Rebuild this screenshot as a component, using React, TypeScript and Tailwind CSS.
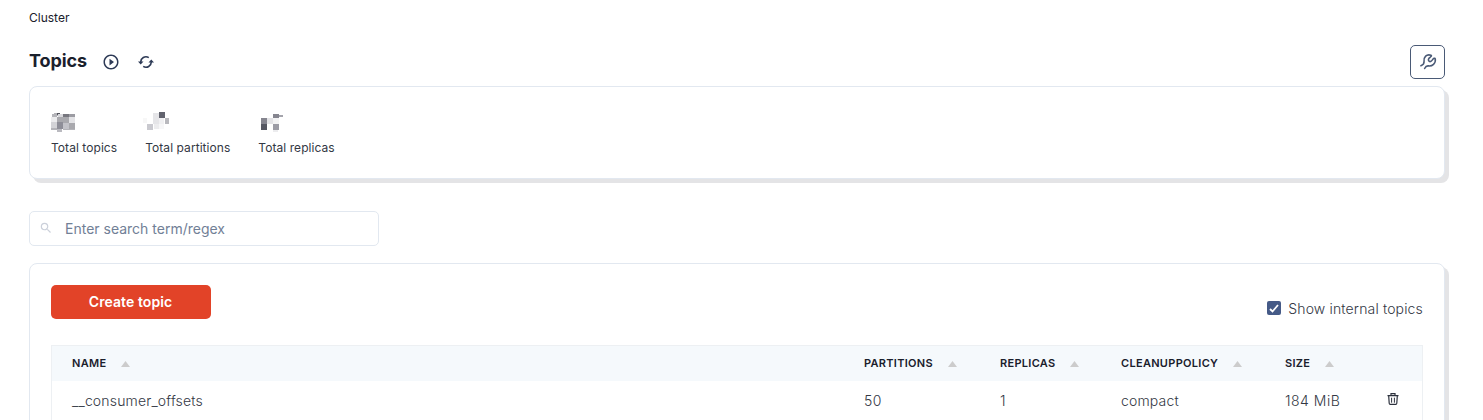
import React from "react";
import { MdSearch, MdPlayCircleOutline } from "react-icons/md";

type Cell = [number, number, number, number, string];

const topicsCells: Cell[] = [
  [1, 4, 5, 3, "#b4b4b9"], [3, 3, 4, 3, "#b4b4b9"], [6, 3, 3, 2, "#55565f"], [7, 4, 5, 3, "#d8d8dc"],
  [12, 4, 6, 3, "#77777f"], [18, 4, 6, 3, "#9c9ca3"], [0, 7, 6, 5, "#ececee"], [6, 7, 6, 6, "#a9a9ae"],
  [12, 7, 6, 6, "#a9a9ae"], [18, 7, 6, 6, "#e3e3e6"], [0, 12, 6, 6, "#d3d3d7"], [6, 12, 6, 7, "#8e8e98"],
  [12, 13, 6, 6, "#c3c3c9"], [18, 13, 6, 6, "#a9a9ae"], [0, 18, 6, 2, "#b4b4b9"], [6, 19, 5, 3, "#babac0"],
  [12, 19, 6, 1, "#b4b4b9"], [18, 19, 6, 1, "#b4b4b9"],
];
const partitionCells: Cell[] = [
  [-2, 8, 4, 5, "#f7f7f7"], [2, 14, 6, 6, "#c9c9cf"], [8, 3, 6, 11, "#e5e5e8"], [9, 14, 5, 5, "#ececee"],
  [14, 2, 6, 6, "#62636e"], [14, 8, 5, 6, "#f0f0f2"], [14, 14, 5, 5, "#f7f7f8"], [20, 8, 4, 6, "#b9b9be"],
];
const replicaCells: Cell[] = [
  [3, 8, 6, 6, "#85858f"], [9, 8, 6, 6, "#e3e3e6"], [3, 14, 6, 6, "#555762"], [15, 4, 6, 4, "#85858f"],
  [15, 8, 6, 6, "#f3f3f4"], [15, 14, 6, 6, "#9c9ca5"], [15, 20, 5, 2, "#ececee"], [21, 5, 4, 2, "#a4a4ac"],
];

function Stat({ cells, label }: { cells: Cell[]; label: string }) {
  return (
    <div>
      <svg width="26" height="24" viewBox="0 0 26 24" className="-ml-px block overflow-visible" shapeRendering="crispEdges">
        <g transform="translate(1 0)">
          {cells.map(([x, y, w, h, fill], i) => (
            <rect key={i} x={x} y={y} width={w} height={h} fill={fill} />
          ))}
        </g>
      </svg>
      <div className="mt-1 text-[12px] leading-5 tracking-[0.06px] text-[#333844]">{label}</div>
    </div>
  );
}

function Sync() {
  return (
    <svg width="16" height="14" viewBox="0 0 16 14" fill="none" stroke="#2d3a56" strokeWidth="1.6" className="ml-[18px]">
      <path d="M2.8 7.4A5.2 5.2 0 0 1 10.8 2.6M13.2 6.6A5.2 5.2 0 0 1 5.2 11.4" />
      <path d="M0 6.6 2.7 9.6 5.5 6.6ZM10.5 7.4 13.3 4.4 16 7.4Z" fill="#2d3a56" stroke="none" />
    </svg>
  );
}

function Wrench() {
  return (
    <svg width="18" height="18" viewBox="0 0 24 24" fill="none" stroke="#4a5a76" strokeWidth="2.1" strokeLinecap="round" strokeLinejoin="round">
      <path d="M2.5 17 C5 16 7 14.5 6.7 11.5 C6 5.5 10 1 16 3 C17.3 3.8 16.2 4.8 15 5.6 C12 7.3 12 9.8 13.7 11.2 C15.5 12.2 17 10.5 18.2 8.8 C19.5 7.2 21 6 21.7 8 C22.7 14 17.5 18 12.5 17.2 C9.5 16.8 8.3 19 7.5 20.7" />
    </svg>
  );
}

function Trash() {
  return (
    <svg width="12" height="12" viewBox="0 0 12 12" fill="none" stroke="#2d323e" className="-mt-1 ml-[16px]">
      <path d="M.5 2.7h11M4 2.4V.7h4v1.7M1.7 3l.5 7.2q.1 1.1 1 1.1h5.6q.9 0 1-1.1l.5-7.2" strokeWidth="1.2" />
      <path d="M4.6 4.7v5M7.4 4.7v5" strokeWidth="1" />
    </svg>
  );
}

function Th({ children, sort = true }: { children?: React.ReactNode; sort?: boolean }) {
  return (
    <div className="flex items-center">
      <span>{children}</span>
      {sort && (
        <svg width="9" height="6" viewBox="0 0 9 6" className="ml-[15px] mt-px">
          <path d="M4.5 0 9 6H0Z" fill="#cccccc" />
        </svg>
      )}
    </div>
  );
}

export default function App() {
  const cols = "grid grid-cols-[792px_136px_121px_164px_1fr_51px] pl-[20px]";
  return (
    <div className="h-[420px] overflow-hidden bg-white pl-[29px] pr-[38px] font-['Inter',sans-serif] text-[#1a202c]">
      <div className="pt-[8px] text-[12px] leading-5">Cluster</div>
      <header className="mt-[17px] flex h-[34px] items-center">
        <h1 className="-mt-[2px] text-[18px] font-bold leading-8 tracking-[-0.1px]">Topics</h1>
        <MdPlayCircleOutline size={18} className="ml-[15px] text-[#2d3a56]" />
        <Sync />
        <button className="ml-auto flex h-[34px] w-[35px] items-center justify-center rounded-[5px] border border-[#4a5a76]">
          <Wrench />
        </button>
      </header>
      <section className="mt-[7px] flex h-[93px] gap-[28px] rounded-lg border border-[#e2e8f0] bg-white pl-[21px] pt-[23px] shadow-[4px_4px_0_#e4e4e6]">
        <Stat cells={topicsCells} label="Total topics" />
        <Stat cells={partitionCells} label="Total partitions" />
        <Stat cells={replicaCells} label="Total replicas" />
      </section>
      <div className="mt-[32px] flex h-[35px] w-[350px] items-center rounded-[5px] border border-[#e2e8f0] pl-[9px]">
        <MdSearch size={14} className="-mt-[2px] text-[#cbd0da]" />
        <span className="ml-[12px] text-[14px] text-[#718096]">Enter search term/regex</span>
      </div>
      <section className="mt-[17px] h-[300px] rounded-lg border border-[#e2e8f0] bg-white px-[21px] pt-[21px] shadow-[4px_4px_0_#e4e4e6]">
        <div className="flex h-[60px] justify-between">
          <button className="h-[34px] w-[160px] rounded-[5px] bg-[#e24328] pb-[2px] pr-px text-[14px] font-semibold tracking-[0.08px] text-white">Create topic</button>
          <label className="mt-[13px] flex h-5 items-center text-[14px] font-light tracking-[0.16px] text-[#333844]">
            <span className="mr-[7px] flex h-[14px] w-[14px] items-center justify-center rounded-[2px] bg-[#455a87]">
              <svg width="10" height="9" viewBox="0 0 10 9" fill="none" stroke="white" strokeWidth="1.8"><path d="m1 5 2.5 2.5L9 1" /></svg>
            </span>
            Show internal topics
          </label>
        </div>
        <div className="h-[200px] border border-[#edf0f3]">
          <div className={`${cols} h-[35px] bg-[#f5f9fc] text-[11px] font-semibold tracking-[0.3px]`}>
            <Th>NAME</Th><Th>PARTITIONS</Th><Th>REPLICAS</Th><Th>CLEANUPPOLICY</Th><Th>SIZE</Th><Th sort={false} />
          </div>
          <div className={`${cols} h-[39px] items-center text-[14px] font-light tracking-[0.17px] text-[#333844]`}>
            <span>__consumer_offsets</span><span className="tracking-[0.5px]">50</span><span>1</span><span>compact</span><span className="tracking-[0.5px]">184 MiB</span>
            <Trash />
          </div>
        </div>
      </section>
    </div>
  );
}
